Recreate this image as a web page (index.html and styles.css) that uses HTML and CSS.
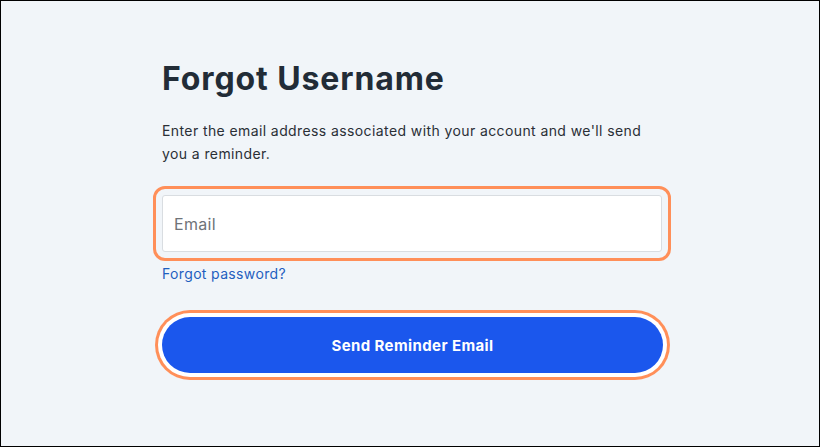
FILE: index.html
```html
<!DOCTYPE html>
<html lang="en">
<head>
  <meta charset="UTF-8">
  <meta name="viewport" content="width=device-width, initial-scale=1.0">
  <title>Forgot Username</title>

  <link rel="stylesheet" href="styles.css">
</head>
<body>

  <!-- Forgot username form -->
  <main class="page">
    <form class="reminder-form" onsubmit="return false">
      <h1>Forgot Username</h1>
      <p class="intro">Enter the email address associated with your account and we'll send you a reminder.</p>

      <input type="email" class="email-input" placeholder="Email">

      <a href="#" class="forgot-link">Forgot password?</a>

      <button type="submit" class="send-btn">Send Reminder Email</button>
    </form>
  </main>

</body>
</html>
```

FILE: styles.css
```css
* {
  margin: 0;
  padding: 0;
  box-sizing: border-box;
}

body {
  font-family: Inter, "Open Sans", Arial, sans-serif;
  background: #f1f5f9;
}

.page {
  height: 447px;
  border: 1px solid #000;
  background: #f1f5f9;
  padding: 58px 0 0 161px;
}

.reminder-form {
  width: 500px;
  display: flex;
  flex-direction: column;
  align-items: flex-start;
}

h1 {
  font-size: 32px;
  line-height: 40px;
  font-weight: 700;
  letter-spacing: 0.9px;
  color: #222c37;
}

.intro {
  margin-top: 20px;
  font-size: 14px;
  line-height: 23px;
  letter-spacing: 0.4px;
  color: #2a2f36;
}

.email-input {
  margin-top: 30px;
  width: 500px;
  height: 57px;
  padding: 0 11px;
  border: 1px solid #d9dde1;
  border-radius: 3px;
  background: #fff;
  font-family: inherit;
  font-size: 16px;
  letter-spacing: 0.3px;
  color: #222c37;
  outline: 3px solid #ff8f59;
  outline-offset: 6px;
}

.email-input::placeholder {
  color: #6f7378;
}

.forgot-link {
  margin-top: 12px;
  font-size: 14px;
  line-height: 20px;
  letter-spacing: 0.35px;
  color: #1f5fbf;
  text-decoration: none;
}

.forgot-link:hover {
  text-decoration: underline;
}

.send-btn {
  margin-top: 33px;
  width: 501px;
  height: 56px;
  border: none;
  border-radius: 28px;
  background: #1b57ed;
  color: #fff;
  font-family: inherit;
  font-size: 15px;
  font-weight: 700;
  letter-spacing: 0.4px;
  cursor: pointer;
  box-shadow: 0 0 0 4px #fff, 0 0 0 7px #ff8f59;
}

.send-btn:hover {
  background: #1447c9;
}
```
